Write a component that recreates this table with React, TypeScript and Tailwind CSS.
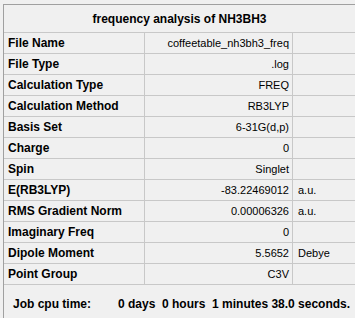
const rows: [string, string, string][] = [
  ["File Name", "coffeetable_nh3bh3_freq", ""],
  ["File Type", ".log", ""],
  ["Calculation Type", "FREQ", ""],
  ["Calculation Method", "RB3LYP", ""],
  ["Basis Set", "6-31G(d,p)", ""],
  ["Charge", "0", ""],
  ["Spin", "Singlet", ""],
  ["E(RB3LYP)", "-83.22469012", "a.u."],
  ["RMS Gradient Norm", "0.00006326", "a.u."],
  ["Imaginary Freq", "0", ""],
  ["Dipole Moment", "5.5652", "Debye"],
  ["Point Group", "C3V", ""],
];

export default function App() {
  return (
    <div
      className="h-[318px] w-[355px] overflow-hidden bg-[#f0f0f0] pl-[3px] pt-[4px] text-[12px] text-black"
      style={{ fontFamily: '"Liberation Sans", Arial, sans-serif' }}
    >
      <div className="h-full border-l border-t border-[#a0a0a0]">
        <div className="flex h-[28px] items-center justify-center border-b border-[#c8c8c8] font-bold">
          frequency analysis of NH3BH3
        </div>
        <div className="grid grid-cols-[141px_148px_1fr]">
          {rows.map(([label, value, unit]) => (
            <div key={label} className="contents">
              <div className="flex h-[21px] items-center border-b border-r border-[#c8c8c8] pl-[4px] font-bold">
                {label}
              </div>
              <div className="flex h-[21px] items-center justify-end border-b border-r border-[#c8c8c8] pr-[3px] text-[11px]">
                {value}
              </div>
              <div className="flex h-[21px] items-center border-b border-[#c8c8c8] pl-[5px] text-[11px]">
                {unit}
              </div>
            </div>
          ))}
        </div>
        <div className="flex h-[33px] items-end pb-[5px] pl-[9px] font-bold">
          <span className="w-[105px]">Job cpu time:</span>
          <span className="whitespace-pre">0 days  0 hours  1 minutes 38.0 seconds.</span>
        </div>
      </div>
    </div>
  );
}
